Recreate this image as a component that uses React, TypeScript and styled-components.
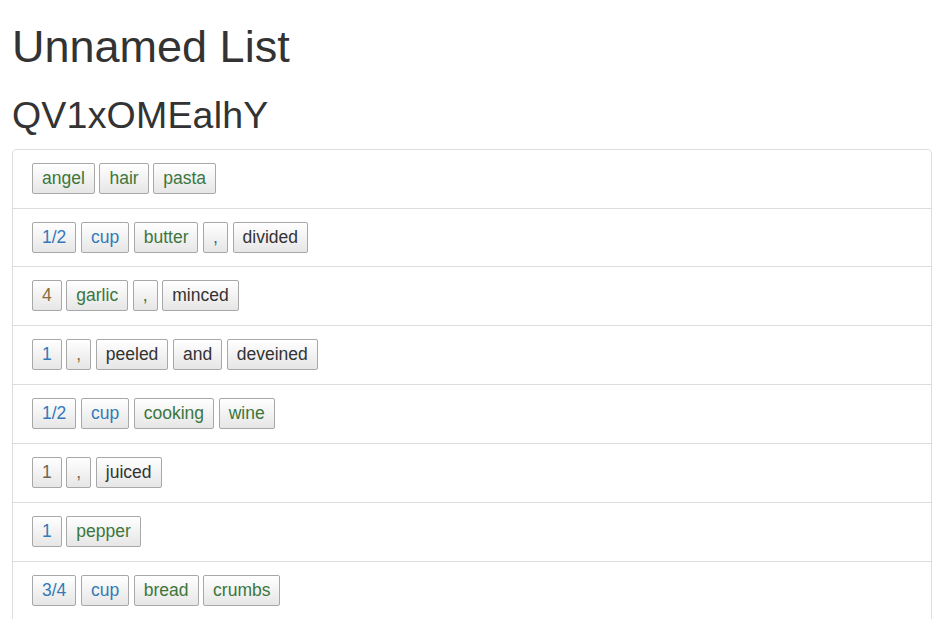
import styled, { createGlobalStyle } from 'styled-components';

type Tone = 'qty' | 'unit' | 'name' | 'plain' | 'punct' | 'warn' | 'muted';

const rows: [string, Tone][][] = [
	[
		['angel', 'name'],
		['hair', 'name'],
		['pasta', 'name'],
	],
	[
		['1/2', 'qty'],
		['cup', 'unit'],
		['butter', 'name'],
		[',', 'punct'],
		['divided', 'plain'],
	],
	[
		['4', 'warn'],
		['garlic', 'name'],
		[',', 'name'],
		['minced', 'plain'],
	],
	[
		['1', 'qty'],
		[',', 'warn'],
		['peeled', 'plain'],
		['and', 'plain'],
		['deveined', 'plain'],
	],
	[
		['1/2', 'qty'],
		['cup', 'unit'],
		['cooking', 'name'],
		['wine', 'name'],
	],
	[
		['1', 'muted'],
		[',', 'muted'],
		['juiced', 'plain'],
	],
	[
		['1', 'qty'],
		['pepper', 'name'],
	],
	[
		['3/4', 'qty'],
		['cup', 'unit'],
		['bread', 'name'],
		['crumbs', 'name'],
	],
];

const toneColor: Record<Tone, string> = {
	qty: '#337ab7',
	unit: '#337ab7',
	name: '#3c763d',
	plain: '#333333',
	punct: '#31708f',
	warn: '#8a6d3b',
	muted: '#6f6553',
};

function App() {
	return (
		<Page>
			<GlobalStyle />
			<Title>Unnamed List</Title>
			<SubTitle>QV1xOMEalhY</SubTitle>
			<ListGroup>
				{rows.map((row, i) => (
					<ListItem key={i}>
						{row.map(([text, tone], j) => (
							<Token key={j} $tone={tone}>
								{text}
							</Token>
						))}
					</ListItem>
				))}
			</ListGroup>
		</Page>
	);
}

export default App;

const GlobalStyle = createGlobalStyle`
	body {
		margin: 0;
		background: #fff;
		color: #333;
		font-family: "Liberation Sans", Arial, sans-serif;
		font-size: 17.5px;
		line-height: 1.42857;
	}
`;

const Page = styled.div`
	padding: 0 13px 0 12px;
`;

const Title = styled.h1`
	margin: 22px 0 0;
	font-size: 45px;
	font-weight: 400;
	line-height: 1.1;
	color: #333;
`;

const SubTitle = styled.h2`
	margin: 23px 0 13px;
	font-size: 37.5px;
	font-weight: 400;
	line-height: 1.1;
	letter-spacing: 0.2px;
	color: #333;
`;

const ListGroup = styled.div`
	border: 1px solid #ddd;
	border-bottom: none;
	border-radius: 5px 5px 0 0;
	overflow: hidden;
`;

const ListItem = styled.div`
	display: flex;
	flex-wrap: wrap;
	gap: 4.6px;
	padding: 13px 19px 13.85px;
	border-bottom: 1px solid #ddd;
	background: #fff;
`;

const Token = styled.span<{ $tone: Tone }>`
	display: inline-block;
	padding: 2px 9px;
	border: 1px solid #a8a8a8;
	border-radius: 2px;
	background: linear-gradient(to bottom, #ffffff 0%, #e6e6e6 100%);
	color: ${(p) => toneColor[p.$tone]};
	font-size: 17.5px;
	line-height: 25px;
	white-space: nowrap;
`;
